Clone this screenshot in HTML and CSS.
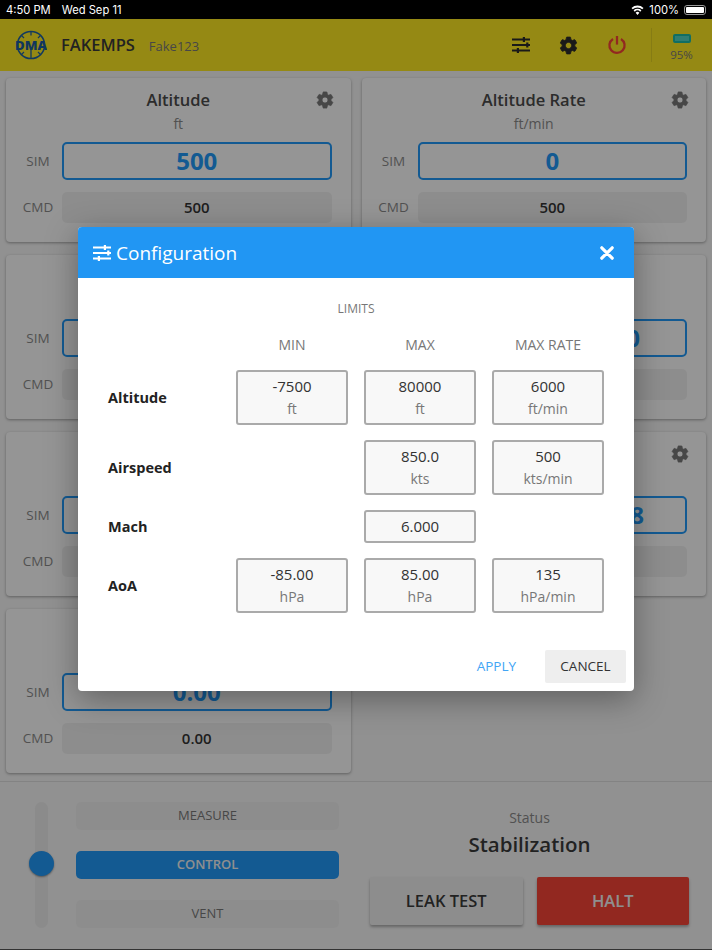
FILE: index.html
```html
<!DOCTYPE html>
<html lang="en">
<head>
<meta charset="utf-8">
<title>FAKEMPS</title>
<link rel="stylesheet" href="styles.css">
</head>
<body>
<svg class="defs" width="0" height="0" aria-hidden="true">
  <symbol id="gear" viewBox="0 0 24 24"><path d="M19.14 12.94c.04-.3.06-.61.06-.94 0-.32-.02-.64-.07-.94l2.03-1.58a.49.49 0 0 0 .12-.61l-1.92-3.32a.488.488 0 0 0-.59-.22l-2.39.96c-.5-.38-1.03-.7-1.62-.94l-.36-2.54a.484.484 0 0 0-.48-.41h-3.84c-.24 0-.43.17-.47.41l-.36 2.54c-.59.24-1.13.57-1.62.94l-2.39-.96c-.22-.08-.47 0-.59.22L2.74 8.87c-.12.21-.08.47.12.61l2.03 1.58c-.05.3-.09.63-.09.94s.02.64.07.94l-2.03 1.58a.49.49 0 0 0-.12.61l1.92 3.32c.12.22.37.29.59.22l2.39-.96c.5.38 1.03.7 1.62.94l.36 2.54c.05.24.24.41.48.41h3.84c.24 0 .44-.17.47-.41l.36-2.54c.59-.24 1.13-.56 1.62-.94l2.39.96c.22.08.47 0 .59-.22l1.92-3.32c.12-.22.07-.47-.12-.61l-2.01-1.58zM12 15.6c-1.98 0-3.6-1.62-3.6-3.6s1.62-3.6 3.6-3.6 3.6 1.62 3.6 3.6-1.62 3.6-3.6 3.6z"/></symbol>
  <symbol id="sliders" viewBox="0 0 18 16"><path d="M0 1.6h18v1.9H0zM0 7.1h18v1.9H0zM0 12.6h18v1.9H0z"/><path d="M10.8 0h2.2v5h-2.2zM14.2 5.6h2.2v5h-2.2zM4.8 11.1h2.2v4.9H4.8z"/></symbol>
</svg>

<div class="statusbar">
  <div class="status-left"><span>4:50 PM</span><span>Wed Sep 11</span></div>
  <div class="status-right">
    <svg class="wifi" viewBox="0 0 16 12"><path d="M8 12 5.7 9.3a3.4 3.4 0 0 1 4.6 0zM4.6 8 3.2 6.4a7.2 7.2 0 0 1 9.6 0L11.4 8a5 5 0 0 0-6.8 0zM2.1 5.1.6 3.4a11 11 0 0 1 14.8 0l-1.5 1.7a8.8 8.8 0 0 0-11.8 0z"/></svg>
    <span>100%</span>
    <span class="ios-batt"><span class="ios-batt-fill"></span></span>
  </div>
</div>

<header class="appbar">
  <svg class="logo" viewBox="0 0 32 32">
    <circle cx="16" cy="16" r="13.6" fill="none" stroke="#1f5f9f" stroke-width="1.5"/>
    <path d="M16 2.4v4M16 25.6v4M6.4 6.4l2.6 2.6M25.6 6.4 23 9M6.4 25.6 9 23M25.6 25.6 23 23M16 20v6" stroke="#1f5f9f" stroke-width="1.3"/>
    <text x="0" y="21" textLength="32" lengthAdjust="spacingAndGlyphs" class="logo-text">DMA</text>
  </svg>
  <span class="app-name">FAKEMPS</span>
  <span class="app-id">Fake123</span>
  <div class="app-actions">
    <svg class="app-icon sliders-icon"><use href="#sliders"/></svg>
    <svg class="app-icon gear-icon"><use href="#gear"/></svg>
    <svg class="app-icon power-icon" viewBox="0 0 20 20"><path d="M6 3.9a7.6 7.6 0 1 0 8 0" fill="none" stroke-width="2.3"/><path d="M10 1v8.6" stroke-width="2.3"/></svg>
  </div>
  <div class="power-level">
    <span class="batt"></span>
    <span class="batt-text">95%</span>
  </div>
</header>

<main class="grid">
  <section class="card">
    <div class="card-head"><span></span><h2>Altitude</h2><svg class="card-gear"><use href="#gear"/></svg></div>
    <div class="unit">ft</div>
    <div class="row"><span class="row-label">SIM</span><div class="sim">500</div></div>
    <div class="row"><span class="row-label">CMD</span><div class="cmd">500</div></div>
  </section>
  <section class="card">
    <div class="card-head"><span></span><h2>Altitude Rate</h2><svg class="card-gear"><use href="#gear"/></svg></div>
    <div class="unit">ft/min</div>
    <div class="row"><span class="row-label">SIM</span><div class="sim">0</div></div>
    <div class="row"><span class="row-label">CMD</span><div class="cmd">500</div></div>
  </section>
  <section class="card">
    <div class="card-head"></div>
    <div class="unit"></div>
    <div class="row"><span class="row-label">SIM</span><div class="sim"></div></div>
    <div class="row"><span class="row-label">CMD</span><div class="cmd"></div></div>
  </section>
  <section class="card">
    <div class="card-head"></div>
    <div class="unit"></div>
    <div class="row"><span class="row-label">SIM</span><div class="sim sim-end sim-end-a">0</div></div>
    <div class="row"><span class="row-label">CMD</span><div class="cmd"></div></div>
  </section>
  <section class="card">
    <div class="card-head"></div>
    <div class="unit"></div>
    <div class="row"><span class="row-label">SIM</span><div class="sim"></div></div>
    <div class="row"><span class="row-label">CMD</span><div class="cmd"></div></div>
  </section>
  <section class="card">
    <div class="card-head"><span></span><span></span><svg class="card-gear"><use href="#gear"/></svg></div>
    <div class="unit"></div>
    <div class="row"><span class="row-label">SIM</span><div class="sim sim-end sim-end-b">8</div></div>
    <div class="row"><span class="row-label">CMD</span><div class="cmd"></div></div>
  </section>
  <section class="card">
    <div class="card-head"></div>
    <div class="unit"></div>
    <div class="row"><span class="row-label">SIM</span><div class="sim">0.00</div></div>
    <div class="row"><span class="row-label">CMD</span><div class="cmd">0.00</div></div>
  </section>
</main>

<footer class="panel">
  <div class="mode">
    <div class="track"><span class="thumb"></span></div>
    <div class="mode-buttons">
      <div class="mode-btn">MEASURE</div>
      <div class="mode-btn mode-on">CONTROL</div>
      <div class="mode-btn">VENT</div>
    </div>
  </div>
  <div class="state">
    <div class="state-label">Status</div>
    <div class="state-value">Stabilization</div>
    <div class="state-buttons">
      <div class="big-btn">LEAK TEST</div>
      <div class="big-btn halt">HALT</div>
    </div>
  </div>
</footer>

<div class="overlay">
  <div class="modal">
    <div class="modal-head">
      <svg class="modal-icon"><use href="#sliders"/></svg>
      <span class="modal-title">Configuration</span>
      <svg class="modal-close" viewBox="0 0 14 14"><path d="M1.8 1.8l10.4 10.4M12.2 1.8 1.8 12.2"/></svg>
    </div>
    <div class="modal-body">
      <div class="limits">LIMITS</div>
      <div class="table">
        <span></span><div class="col">MIN</div><div class="col">MAX</div><div class="col">MAX RATE</div>

        <div class="name">Altitude</div>
        <div class="box"><span class="num">-7500</span><span class="box-unit">ft</span></div>
        <div class="box"><span class="num">80000</span><span class="box-unit">ft</span></div>
        <div class="box"><span class="num">6000</span><span class="box-unit">ft/min</span></div>

        <div class="name">Airspeed</div>
        <span></span>
        <div class="box"><span class="num">850.0</span><span class="box-unit">kts</span></div>
        <div class="box"><span class="num">500</span><span class="box-unit">kts/min</span></div>

        <div class="name">Mach</div>
        <span></span>
        <div class="box box-small"><span class="num">6.000</span></div>
        <span></span>

        <div class="name">AoA</div>
        <div class="box"><span class="num">-85.00</span><span class="box-unit">hPa</span></div>
        <div class="box"><span class="num">85.00</span><span class="box-unit">hPa</span></div>
        <div class="box"><span class="num">135</span><span class="box-unit">hPa/min</span></div>
      </div>
    </div>
    <div class="modal-actions">
      <div class="apply">APPLY</div>
      <div class="cancel">CANCEL</div>
    </div>
  </div>
</div>
</body>
</html>
```

FILE: styles.css
```css
* { box-sizing: border-box; }
html, body { margin: 0; padding: 0; }
body {
  width: 712px;
  height: 950px;
  overflow: hidden;
  position: relative;
  background: #f2f2f2;
  font-family: "Open Sans", "Noto Sans", sans-serif;
  color: #333;
}
.defs { position: absolute; }

.statusbar {
  position: relative;
  z-index: 3;
  height: 19px;
  background: #000;
  color: #fff;
  font: 11.2px Inter, "Liberation Sans", sans-serif;
  display: flex;
  justify-content: space-between;
  align-items: center;
  padding: 0 6px 0 6px;
}
.status-left { display: flex; gap: 11px; }
.status-right { display: flex; align-items: center; gap: 5px; }
.wifi { width: 13px; height: 10px; fill: #fff; }
.ios-batt {
  width: 22px;
  height: 10px;
  border: 1px solid #999;
  border-radius: 3px;
  padding: 1px;
  display: flex;
}
.ios-batt-fill { flex: 1; background: #fff; border-radius: 1px; }

.appbar {
  height: 52px;
  background: #f9e522;
  display: flex;
  align-items: center;
  padding-left: 15px;
}
.logo { width: 32px; height: 32px; flex: none; }
.logo-text { font: 800 12px "Open Sans", sans-serif; fill: #1c5c9c; }
.app-name { margin-left: 14px; font-size: 16.5px; font-weight: 600; color: #3a3a3a; line-height: 52px; }
.app-id { margin-left: 14px; font-size: 13px; color: #777; padding-top: 2px; }
.app-actions { margin-left: auto; display: flex; align-items: center; gap: 28px; }
.app-icon { display: block; width: 20px; height: 20px; }
.sliders-icon { width: 18px; height: 16px; fill: #2a2a2a; }
.gear-icon { width: 21px; height: 21px; fill: #2a2a2a; stroke: #2a2a2a; stroke-width: 1; }
.power-icon { stroke: #f44336; }
.power-level {
  margin-left: 24px;
  width: 61px;
  height: 34px;
  border-left: 1px solid #e0cf22;
  display: flex;
  flex-direction: column;
  align-items: center;
  padding-right: 1px;
}
.batt { display: block; width: 18px; height: 9px; margin-top: 6px; border: 2px solid #1cb8a6; border-radius: 2px; background: #4fd0c0; }
.batt-text { font-size: 11.5px; color: #777; line-height: 14px; margin-top: 5px; }

.grid {
  height: 710px;
  padding: 7px 6px 8px;
  display: grid;
  grid-template-columns: 1fr 1fr;
  grid-auto-rows: 164px;
  column-gap: 11px;
  row-gap: 13px;
}
.card {
  background: #f8f8f8;
  border-radius: 4px;
  box-shadow: 0 1px 3px rgba(0, 0, 0, .35);
  padding-top: 8px;
}
.card-head {
  height: 28px;
  display: grid;
  grid-template-columns: 1fr auto 1fr;
  align-items: center;
}
.card-head h2 { margin: 0; font-size: 16.5px; font-weight: 600; color: #4a4a4a; line-height: 28px; }
.card-gear { justify-self: end; margin-right: 16px; width: 20px; height: 20px; fill: #777; stroke: #777; stroke-width: 1; }
.unit { height: 20px; line-height: 20px; text-align: center; font-size: 14px; color: #888; }
.row {
  display: grid;
  grid-template-columns: 48px 1fr;
  align-items: center;
  margin: 12px 19px 0 8px;
}
.unit + .row { margin-top: 8px; }
.row-label { text-align: center; font-size: 13.5px; color: #888; padding-bottom: 1px; }
.sim {
  height: 38px;
  padding-bottom: 2px;
  border: 2px solid #2196f3;
  border-radius: 5px;
  color: #2196f3;
  font-size: 24px;
  font-weight: 700;
  display: flex;
  align-items: center;
  justify-content: center;
}
.sim-end { justify-content: flex-end; }
.sim-end-a { padding-right: 45px; }
.sim-end-b { padding-right: 41px; }
.cmd {
  height: 31px;
  padding-bottom: 1px;
  border-radius: 5px;
  background: #ececec;
  font-size: 15px;
  font-weight: 600;
  color: #333;
  display: flex;
  align-items: center;
  justify-content: center;
}

.panel {
  height: 169px;
  border-top: 1px solid #dadada;
  border-bottom: 1px solid #555;
  display: flex;
  padding: 20px 23px 0 35px;
}
.mode { display: flex; width: 304px; }
.track { position: relative; width: 13px; height: 126px; border-radius: 7px; background: #e8e8e8; }
.thumb {
  position: absolute;
  left: -6px;
  top: 49px;
  width: 25px;
  height: 25px;
  border-radius: 50%;
  background: #2196f3;
  box-shadow: 0 1px 2px rgba(0, 0, 0, .4);
}
.mode-buttons { flex: 1; margin-left: 28px; display: flex; flex-direction: column; justify-content: space-between; height: 126px; }
.mode-btn {
  height: 28px;
  border-radius: 5px;
  background: #ececec;
  color: #777;
  font-size: 13px;
  line-height: 26px;
  text-align: center;
}
.mode-on { background: #2196f3; color: #eee; font-weight: 600; }
.state { margin-left: 31px; flex: 1; display: flex; flex-direction: column; align-items: center; }
.state-label { font-size: 14px; color: #888; line-height: 20px; margin-top: 6px; }
.state-value { font-size: 20.5px; font-weight: 600; color: #3a3a3a; line-height: 30px; margin-top: 1px; }
.state-buttons { display: flex; gap: 14px; margin-top: 18px; width: 100%; }
.big-btn {
  flex: 1;
  height: 48px;
  border-radius: 2px;
  background: #ececec;
  box-shadow: 0 2px 3px rgba(0, 0, 0, .3);
  font-size: 16.5px;
  font-weight: 600;
  color: #3a3a3a;
  line-height: 48px;
  text-align: center;
}
.halt { background: #f44336; color: #eee; }

.overlay {
  position: absolute;
  z-index: 2;
  top: 19px;
  left: 0;
  right: 0;
  bottom: 0;
  background: rgba(0, 0, 0, .4);
  display: flex;
  justify-content: center;
  align-items: flex-start;
  padding-top: 208px;
}
.modal {
  width: 556px;
  height: 464px;
  background: #fff;
  border-radius: 4px;
  box-shadow: 0 8px 32px rgba(0, 0, 0, .35);
  overflow: hidden;
  display: flex;
  flex-direction: column;
}
.modal-head {
  height: 51px;
  flex: none;
  background: #2196f3;
  color: #fff;
  display: flex;
  align-items: center;
  padding: 0 20px 0 15px;
}
.modal-icon { width: 18px; height: 16px; fill: #fff; }
.modal-title { margin-left: 5px; font-size: 19px; line-height: 51px; padding-top: 1px; }
.modal-close { margin-left: auto; width: 14px; height: 14px; stroke: #fff; stroke-width: 3.2; stroke-linecap: round; fill: none; }
.modal-body { flex: 1; padding: 22px 30px 0; }
.limits { text-align: center; font-size: 12px; color: #777; line-height: 18px; }
.table {
  margin-top: 17px;
  display: grid;
  grid-template-columns: 112px 112px 112px 112px;
  column-gap: 16px;
  row-gap: 15px;
}
.col { text-align: center; font-size: 14px; color: #777; line-height: 20px; }
.name { align-self: center; font-size: 14.5px; font-weight: 700; color: #222; }
.box {
  height: 55px;
  padding-bottom: 1px;
  border: 2px solid #aaa;
  border-radius: 3px;
  background: #f8f8f8;
  display: flex;
  flex-direction: column;
  align-items: center;
  justify-content: center;
}
.box-small { height: 33px; padding-bottom: 2px; }
.num { font-size: 15px; color: #333; line-height: 22px; }
.box-unit { font-size: 14px; color: #777; line-height: 22px; margin-bottom: -1px; padding-top: 1px; }
.modal-actions {
  flex: none;
  display: flex;
  justify-content: flex-end;
  align-items: center;
  gap: 29px;
  padding: 0 8px 8px 0;
}
.apply { font-size: 13.5px; color: #42a5f5; padding-bottom: 2px; }
.cancel {
  width: 81px;
  height: 33px;
  border-radius: 2px;
  background: #eee;
  font-size: 13.5px;
  color: #333;
  line-height: 33px;
  text-align: center;
}
```
